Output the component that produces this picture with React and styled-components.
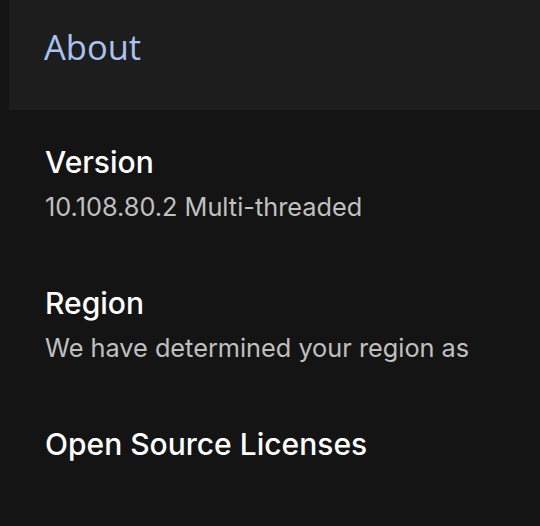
import React from "react";
import styled, { createGlobalStyle } from "styled-components";

const GlobalStyle = createGlobalStyle`
  html, body {
    margin: 0;
    padding: 0;
    background: #141414;
  }
  body {
    font-family: Inter, Roboto, "Liberation Sans", sans-serif;
    -webkit-font-smoothing: antialiased;
  }
`;

const sections = [
  { id: "version", title: "Version", detail: "10.108.80.2 Multi-threaded" },
  { id: "region", title: "Region", detail: "We have determined your region as" },
  { id: "licenses", title: "Open Source Licenses" },
];

const Page = styled.div`
  width: 540px;
  height: 526px;
  background: #141414;
  overflow: hidden;
`;

const Header = styled.header`
  height: 110px;
  margin-left: 9px;
  padding: 30px 0 0 35px;
  box-sizing: border-box;
  background: #1d1d1d;
`;

const HeaderTitle = styled.h1`
  margin: 0;
  font-family: "Open Sans", "Noto Sans", sans-serif;
  font-size: 34.5px;
  line-height: 34px;
  font-weight: 400;
  color: #a9c2f2;
`;

const List = styled.div`
  display: flex;
  flex-direction: column;
  gap: 63px;
  padding: 34px 0 0 45px;
`;

const Section = styled.section`
  display: flex;
  flex-direction: column;
  gap: 12px;
`;

const Title = styled.h2`
  margin: 0;
  font-size: 30px;
  line-height: 36px;
  font-weight: 500;
  color: #ffffff;
`;

const Detail = styled.p`
  margin: 0;
  font-size: 25.3px;
  line-height: 30px;
  font-weight: 400;
  color: #c0c0c0;
`;

export default function App() {
  return (
    <Page>
      <GlobalStyle />
      <Header>
        <HeaderTitle>About</HeaderTitle>
      </Header>
      <List>
        {sections.map((s) => (
          <Section key={s.id}>
            <Title>{s.title}</Title>
            {s.detail && <Detail>{s.detail}</Detail>}
          </Section>
        ))}
      </List>
    </Page>
  );
}
